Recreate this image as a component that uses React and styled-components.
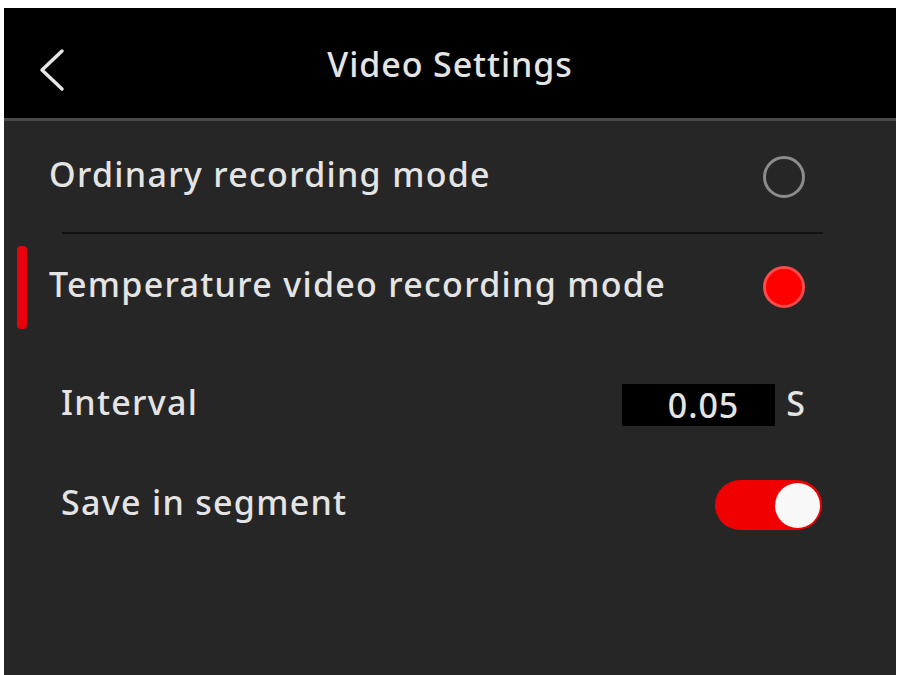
import React from 'react';
import styled, { createGlobalStyle } from 'styled-components';

const GlobalStyle = createGlobalStyle`
  html, body {
    margin: 0;
    padding: 0;
    background: #ffffff;
  }
`;

const Screen = styled.div`
  display: flex;
  flex-direction: column;
  margin: 8px 2px 0 4px;
  height: 667px;
  background: #262626;
  font-family: 'Noto Sans', 'Open Sans', sans-serif;
  font-weight: 500;
  color: #e4e4e4;
  overflow: hidden;
`;

const Header = styled.div`
  display: flex;
  align-items: center;
  box-sizing: border-box;
  height: 113px;
  padding: 8px 0 0 33px;
  background: #000000;
  border-bottom: 3px solid #4a4a4a;
`;

const BackButton = styled.div`
  display: flex;
  width: 32px;
  height: 44px;
  align-items: center;
  margin-top: 5px;
`;

const Title = styled.div`
  flex: 1;
  text-align: center;
  font-size: 34px;
  letter-spacing: 0.9px;
  margin-right: 65px;
  margin-top: -6px;
`;

const List = styled.div`
  display: flex;
  flex-direction: column;
`;

const ModeRow = styled.div`
  display: flex;
  align-items: center;
  height: ${p => p.$height}px;
  padding: 0 91px 0 13px;
`;

const Indicator = styled.div`
  width: 10px;
  height: 83px;
  border-radius: 4px;
  background: ${p => (p.$on ? '#e8000b' : 'transparent')};
  margin-right: 22px;
`;

const Label = styled.div`
  flex: 1;
  font-size: 34px;
  letter-spacing: 1.3px;
  margin-top: -6px;
`;

const Radio = styled.div`
  width: 42px;
  height: 42px;
  box-sizing: border-box;
  border-radius: 50%;
  border: 3px solid ${p => (p.$on ? '#ff4a4a' : '#8c8c8c')};
  background: ${p => (p.$on ? '#ff0000' : 'transparent')};
`;

const Divider = styled.div`
  height: 2px;
  margin: 0 73px 0 58px;
  background: #121212;
`;

const SubRow = styled.div`
  display: flex;
  align-items: center;
  height: 100px;
  padding: 0 74px 0 57px;
`;

const ValueGroup = styled.div`
  display: flex;
  align-items: center;
  margin-right: 17px;
`;

const ValueBox = styled.div`
  width: 153px;
  height: 42px;
  box-sizing: border-box;
  background: #000000;
  font-size: 34px;
  letter-spacing: 1px;
  line-height: 42px;
  text-align: right;
  padding-right: 36px;
`;

const Unit = styled.div`
  font-size: 34px;
  margin-left: 11px;
  margin-top: -4px;
`;

const Toggle = styled.div`
  display: flex;
  justify-content: flex-end;
  align-items: center;
  width: 107px;
  height: 50px;
  box-sizing: border-box;
  padding-right: 2px;
  border-radius: 25px;
  background: #f00000;
`;

const Knob = styled.div`
  width: 45px;
  height: 45px;
  border-radius: 50%;
  background: #f8f8f8;
`;

const Spacer = styled.div`
  height: 15px;
`;

const ChevronLeft = () => (
  <svg width="32" height="44" viewBox="0 0 32 44">
    <polyline
      points="25,3 5,22 25,41"
      fill="none"
      stroke="#e6e6e6"
      strokeWidth="3.5"
      strokeLinecap="round"
      strokeLinejoin="round"
    />
  </svg>
);

const App = () => {
  return (
    <>
      <GlobalStyle />
      <Screen>
        <Header>
          <BackButton>
            <ChevronLeft />
          </BackButton>
          <Title>Video Settings</Title>
        </Header>
        <List>
          <ModeRow $height={111}>
            <Indicator />
            <Label>Ordinary recording mode</Label>
            <Radio />
          </ModeRow>
          <Divider />
          <ModeRow $height={106}>
            <Indicator $on />
            <Label>Temperature video recording mode</Label>
            <Radio $on />
          </ModeRow>
          <Spacer />
          <SubRow>
            <Label>Interval</Label>
            <ValueGroup>
              <ValueBox>0.05</ValueBox>
              <Unit>S</Unit>
            </ValueGroup>
          </SubRow>
          <SubRow>
            <Label>Save in segment</Label>
            <Toggle>
              <Knob />
            </Toggle>
          </SubRow>
        </List>
      </Screen>
    </>
  );
};

export default App;
